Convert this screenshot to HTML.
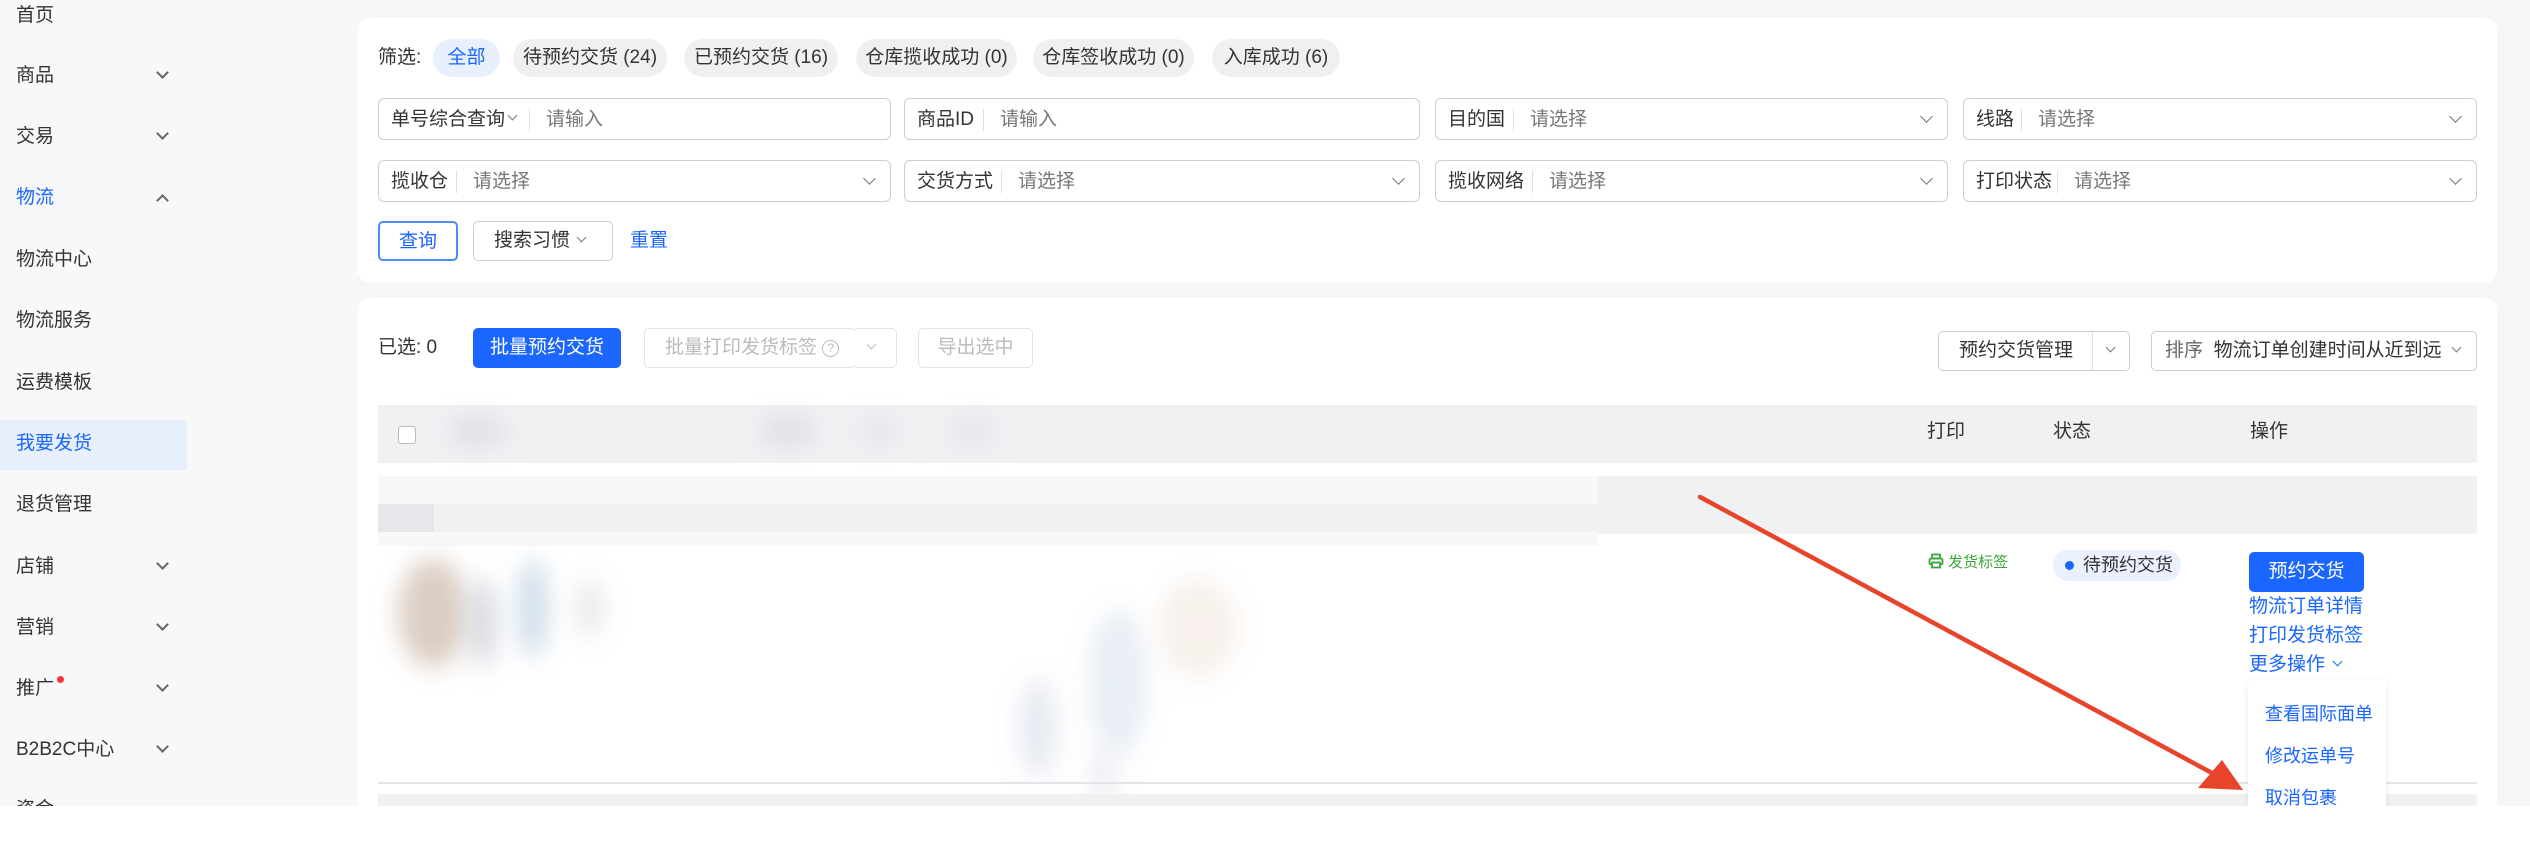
<!DOCTYPE html>
<html><head><meta charset="utf-8">
<style>
*{box-sizing:border-box;margin:0;padding:0}
body{width:2530px;height:846px;overflow:hidden;background:#fff;font-family:"Liberation Sans","Noto Sans CJK SC",sans-serif;font-size:19px;color:#333;position:relative}
.abs{position:absolute}
#page{position:absolute;left:0;top:0;width:2530px;height:806px;background:#f5f6f8;overflow:hidden}
.side{position:absolute;left:0;top:0;width:358px;height:806px;background:#f7f8fa}
.si{position:absolute;left:16px;font-size:19px;color:#333;line-height:24px}
.chev{position:absolute;left:158px;width:9px;height:9px;border-right:2px solid #666;border-bottom:2px solid #666;transform:rotate(45deg)}
.card{position:absolute;left:358px;width:2139px;background:#fff;border-radius:12px}
.pill{position:absolute;top:21px;height:38px;line-height:38px;border-radius:19px;background:#eff0f2;text-align:center;color:#333;white-space:nowrap}
.inp{position:absolute;height:42px;border:1px solid #c9cdd4;border-radius:6px;background:#fff}
.inp .l{position:absolute;left:12px;top:9px;line-height:24px;color:#333}
.inp .sep{position:absolute;top:10px;width:1px;height:22px;background:#ddd}
.inp .p{position:absolute;top:9px;line-height:24px;color:#777}
.dd{position:absolute;width:9px;height:9px;border-right:1.6px solid #777;border-bottom:1.6px solid #777;transform:rotate(45deg)}
.btn{position:absolute;height:40px;line-height:38px;border:1px solid #c9cdd4;border-radius:5px;text-align:center;background:#fff;white-space:nowrap}
.link{position:absolute;color:#1a66ff;line-height:24px;white-space:nowrap}
.blur{position:absolute;filter:blur(12px);border-radius:50%;opacity:.7}
</style></head><body>
<div id="page">
<div class="side">
<div class="si" style="top:4px">首页</div>
<div class="si" style="top:64px">商品</div><div class="chev" style="top:68px"></div>
<div class="si" style="top:125px">交易</div><div class="chev" style="top:129px"></div>
<div class="si" style="top:186px;color:#1a66ff">物流</div><div class="chev" style="top:196px;transform:rotate(225deg)"></div>
<div class="si" style="top:248px">物流中心</div>
<div class="si" style="top:309px">物流服务</div>
<div class="si" style="top:371px">运费模板</div>
<div class="abs" style="left:0;top:420px;width:187px;height:50px;background:#e8effd"></div>
<div class="si" style="top:432px;color:#1a66ff">我要发货</div>
<div class="si" style="top:493px">退货管理</div>
<div class="si" style="top:555px">店铺</div><div class="chev" style="top:559px"></div>
<div class="si" style="top:616px">营销</div><div class="chev" style="top:620px"></div>
<div class="si" style="top:677px">推广</div><div class="abs" style="left:57px;top:676px;width:7px;height:7px;border-radius:50%;background:#f33"></div><div class="chev" style="top:681px"></div>
<div class="si" style="top:738px">B2B2C中心</div><div class="chev" style="top:742px"></div>
<div class="si" style="top:798px">资金</div>
</div>

<div class="card" style="top:18px;height:265px">
<div class="abs" style="left:20px;top:28px;line-height:24px">筛选:</div>
<div class="pill" style="left:75px;width:67px;background:#e8f0fe;color:#1a66ff">全部</div>
<div class="pill" style="left:155px;width:154px">待预约交货 (24)</div>
<div class="pill" style="left:326px;width:154px">已预约交货 (16)</div>
<div class="pill" style="left:498px;width:161px">仓库揽收成功 (0)</div>
<div class="pill" style="left:675px;width:161px">仓库签收成功 (0)</div>
<div class="pill" style="left:854px;width:128px">入库成功 (6)</div>

<div class="inp" style="left:20px;top:80px;width:513px"><span class="l">单号综合查询</span><div class="dd" style="left:130px;top:13px;width:7px;height:7px"></div><div class="sep" style="left:150px"></div><span class="p" style="left:167px">请输入</span></div>
<div class="inp" style="left:546px;top:80px;width:516px"><span class="l">商品ID</span><div class="sep" style="left:78px"></div><span class="p" style="left:95px">请输入</span></div>
<div class="inp" style="left:1077px;top:80px;width:513px"><span class="l">目的国</span><div class="sep" style="left:77px"></div><span class="p" style="left:94px">请选择</span><div class="dd" style="right:16px;top:13px"></div></div>
<div class="inp" style="left:1605px;top:80px;width:514px"><span class="l">线路</span><div class="sep" style="left:57px"></div><span class="p" style="left:74px">请选择</span><div class="dd" style="right:16px;top:13px"></div></div>

<div class="inp" style="left:20px;top:142px;width:513px"><span class="l">揽收仓</span><div class="sep" style="left:77px"></div><span class="p" style="left:94px">请选择</span><div class="dd" style="right:16px;top:13px"></div></div>
<div class="inp" style="left:546px;top:142px;width:516px"><span class="l">交货方式</span><div class="sep" style="left:96px"></div><span class="p" style="left:113px">请选择</span><div class="dd" style="right:16px;top:13px"></div></div>
<div class="inp" style="left:1077px;top:142px;width:513px"><span class="l">揽收网络</span><div class="sep" style="left:96px"></div><span class="p" style="left:113px">请选择</span><div class="dd" style="right:16px;top:13px"></div></div>
<div class="inp" style="left:1605px;top:142px;width:514px"><span class="l">打印状态</span><div class="sep" style="left:93px"></div><span class="p" style="left:110px">请选择</span><div class="dd" style="right:16px;top:13px"></div></div>

<div class="btn" style="left:20px;top:203px;width:80px;border:2px solid #4d8bf5;color:#1a66ff">查询</div>
<div class="btn" style="left:115px;top:203px;width:140px;text-align:left;padding-left:20px">搜索习惯<div class="dd" style="left:104px;top:12px;width:7px;height:7px"></div></div>
<div class="link" style="left:272px;top:211px">重置</div>
</div>

<div class="card" style="top:298px;height:560px">
<div class="abs" style="left:20px;top:38px;line-height:24px">已选: 0</div>
<div class="btn" style="left:115px;top:30px;width:148px;background:#1a66ff;border-color:#1a66ff;color:#fff">批量预约交货</div>
<div class="btn" style="left:286px;top:30px;width:211px;color:#bbb;border-color:#e0e2e6;text-align:left;padding-left:20px">批量打印发货标签 <span style="display:inline-block;width:17px;height:17px;border:1.5px solid #bbb;border-radius:50%;font-size:12px;line-height:14px;text-align:center;vertical-align:1px">?</span><div class="abs" style="left:208px;top:0;width:1px;height:38px;background:#e0e2e6"></div></div>
<div class="btn" style="left:494px;top:30px;width:45px;border-color:#e0e2e6;border-left:none"><div class="dd" style="left:16px;top:12px;width:7px;height:7px;border-color:#bbb"></div></div>
<div class="btn" style="left:560px;top:30px;width:115px;color:#bbb;border-color:#e0e2e6">导出选中</div>
<div class="btn" style="left:1580px;top:33px;width:192px;text-align:left;padding-left:20px">预约交货管理<div class="abs" style="left:153px;top:0;width:1px;height:38px;background:#ddd"></div><div class="dd" style="left:168px;top:12px;width:7px;height:7px"></div></div>
<div class="btn" style="left:1793px;top:33px;width:326px;text-align:left;padding-left:13px"><span style="color:#666">排序</span>&nbsp;&nbsp;物流订单创建时间从近到远<div class="dd" style="right:16px;top:12px;width:7px;height:7px"></div></div>

<div class="abs" style="left:20px;top:107px;width:2099px;height:58px;background:#f0f1f3"></div>
<div class="abs" style="left:40px;top:128px;width:18px;height:18px;border:1.5px solid #bbb;border-radius:3px;background:#fff"></div>
<div class="blur" style="left:90px;top:118px;width:60px;height:30px;background:#d6d9de"></div>
<div class="blur" style="left:400px;top:118px;width:60px;height:30px;background:#d6d9de"></div>
<div class="blur" style="left:500px;top:118px;width:40px;height:30px;background:#e0e2e6"></div>
<div class="blur" style="left:590px;top:118px;width:50px;height:30px;background:#e0e2e6"></div>
<div class="abs" style="left:1569px;top:122px;line-height:24px">打印</div>
<div class="abs" style="left:1695px;top:122px;line-height:24px">状态</div>
<div class="abs" style="left:1892px;top:122px;line-height:24px">操作</div>

<div class="abs" style="left:20px;top:178px;width:2099px;height:58px;background:#f0f1f3"></div>
<div class="abs" style="left:20px;top:178px;width:1220px;height:28px;background:#f7f8f9"></div>
<div class="abs" style="left:20px;top:206px;width:56px;height:28px;background:#e6e7ea"></div>
<div class="abs" style="left:20px;top:234px;width:1220px;height:14px;background:#f8f8f9"></div>

<div class="blur" style="left:40px;top:260px;width:70px;height:110px;background:#cdb9aa"></div>
<div class="blur" style="left:110px;top:280px;width:30px;height:90px;background:#c9ccd8"></div>
<div class="blur" style="left:160px;top:260px;width:30px;height:100px;background:#b9cde0"></div>
<div class="blur" style="left:220px;top:280px;width:25px;height:60px;background:#d9dde2"></div>
<div class="blur" style="left:730px;top:310px;width:60px;height:150px;background:#dfe7f1"></div>
<div class="blur" style="left:800px;top:280px;width:80px;height:100px;background:#f4ebe4"></div>
<div class="blur" style="left:660px;top:380px;width:40px;height:100px;background:#dde2ec"></div>
<div class="blur" style="left:730px;top:450px;width:30px;height:60px;background:#ebe7ee"></div>

<div class="abs" style="left:1570px;top:254px;color:#3aa63a;font-size:15px;line-height:22px;white-space:nowrap"><svg width="16" height="16" viewBox="0 0 16 16" style="vertical-align:-2px"><rect x="4" y="1.5" width="8" height="4" fill="none" stroke="#3aa63a" stroke-width="1.8"/><rect x="1.5" y="5.5" width="13" height="6" rx="1.5" fill="none" stroke="#3aa63a" stroke-width="1.8"/><rect x="4" y="9.5" width="8" height="5" fill="#fff" stroke="#3aa63a" stroke-width="1.8"/></svg> 发货标签</div>
<div class="abs" style="left:1695px;top:252px;width:128px;height:31px;border-radius:15px;background:#eaf0fd;line-height:31px;padding-left:30px;white-space:nowrap;font-size:18px">待预约交货<div class="abs" style="left:12px;top:11px;width:9px;height:9px;border-radius:50%;background:#1a66ff"></div></div>
<div class="btn" style="left:1891px;top:254px;width:115px;background:#1a66ff;border-color:#1a66ff;color:#fff">预约交货</div>
<div class="link" style="left:1891px;top:297px">物流订单详情</div>
<div class="link" style="left:1891px;top:326px">打印发货标签</div>
<div class="link" style="left:1891px;top:355px">更多操作 <span class="dd" style="position:relative;display:inline-block;left:4px;top:-5px;width:7px;height:7px;border-color:#1a66ff"></span></div>

<div class="abs" style="left:20px;top:484px;width:2099px;height:2px;background:#e3e4e9"></div>
<div class="abs" style="left:20px;top:496px;width:2099px;height:20px;background:#f0f1f3"></div>

<div class="abs" style="left:1890px;top:382px;width:138px;height:200px;background:#fff;border-radius:6px;box-shadow:0 2px 8px rgba(0,0,0,.08);font-size:18px">
<div class="link" style="left:17px;top:22px">查看国际面单</div>
<div class="link" style="left:17px;top:64px">修改运单号</div>
<div class="link" style="left:17px;top:106px">取消包裹</div>
</div>
</div>

<svg class="abs" style="left:0;top:0" width="2530" height="806"><line x1="1700" y1="497" x2="2225" y2="780" stroke="#e8442b" stroke-width="4.5" stroke-linecap="round"/><polygon points="2243,790 2198,788 2222,760" fill="#e8442b"/></svg>
</div>
</body></html>
